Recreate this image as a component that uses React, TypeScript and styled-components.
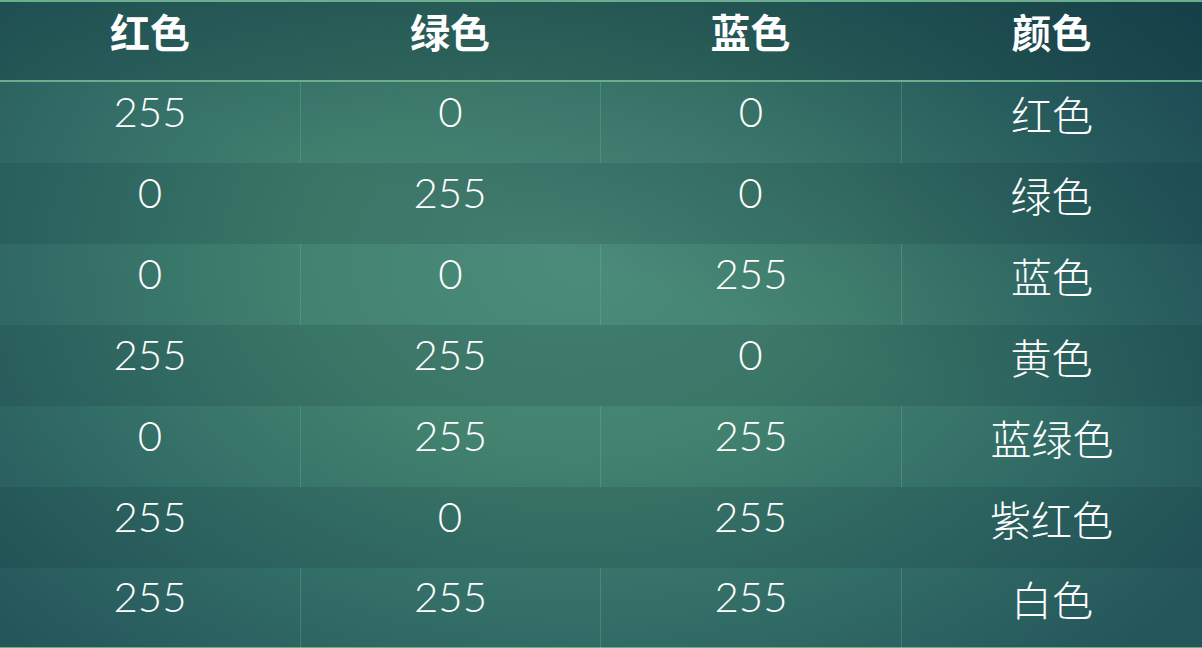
import React from "react";
import styled, { createGlobalStyle } from "styled-components";

const GlobalStyle = createGlobalStyle`
  html, body {
    margin: 0;
    padding: 0;
    background: #2c6463;
  }
`;

const headers = ["红色", "绿色", "蓝色", "颜色"];

const rows: string[][] = [
  ["255", "0", "0", "红色"],
  ["0", "255", "0", "绿色"],
  ["0", "0", "255", "蓝色"],
  ["255", "255", "0", "黄色"],
  ["0", "255", "255", "蓝绿色"],
  ["255", "0", "255", "紫红色"],
  ["255", "255", "255", "白色"],
];

const Table = styled.div`
  width: 1202px;
  height: 648px;
  box-sizing: border-box;
  display: grid;
  grid-template-rows: 80px repeat(6, 81px) 80px;
  border-top: 2px solid #6aae8c;
  background:
    linear-gradient(200deg, rgba(14, 52, 70, 0.5) 0%, rgba(14, 52, 70, 0) 45%),
    radial-gradient(ellipse 65% 85% at 48% 40%, #4c8c7b 0%, #42826f 35%, #336e67 65%, #24555b 100%);
  overflow: hidden;
`;

const Row = styled.div<{ $shade: "head" | "dark" | "light" }>`
  display: grid;
  grid-template-columns: 300px 300px 301px 301px;
  background: ${(p) =>
    p.$shade === "head"
      ? "rgba(8, 40, 48, 0.24)"
      : p.$shade === "dark"
      ? "rgba(8, 40, 48, 0.13)"
      : "transparent"};
  border-bottom: ${(p) => (p.$shade === "head" ? "2px solid #6aae8c" : "none")};
  box-sizing: border-box;

  &:last-child {
    border-bottom: 1px solid #6aae8c;
  }
`;

const HeadCell = styled.div`
  display: flex;
  align-items: center;
  justify-content: center;
  padding-bottom: 20px;
  color: #ffffff;
  font-family: "Noto Sans CJK SC", "Noto Sans", sans-serif;
  font-weight: 700;
  font-size: 40px;
`;

const Cell = styled.div<{ $line: boolean; $cjk: boolean }>`
  display: flex;
  align-items: center;
  justify-content: center;
  padding-bottom: ${(p) => (p.$cjk ? "20px" : "24px")};
  color: #ffffff;
  font-family: ${(p) =>
    p.$cjk
      ? `"Noto Sans CJK SC", "Noto Sans", sans-serif`
      : `Lato, "Noto Sans", sans-serif`};
  font-weight: 300;
  font-size: ${(p) => (p.$cjk ? "41px" : "42px")};
  border-left: ${(p) => (p.$line ? "1px solid rgba(120, 190, 150, 0.3)" : "none")};
`;

const App = () => {
  return (
    <React.Fragment>
      <GlobalStyle />
      <Table>
        <Row $shade="head">
          {headers.map((h) => (
            <HeadCell key={h}>{h}</HeadCell>
          ))}
        </Row>
        {rows.map((r, i) => (
          <Row key={`row-${i}`} $shade={i % 2 === 0 ? "light" : "dark"}>
            {r.map((v, j) => (
              <Cell
                key={`cell-${i}-${j}`}
                $line={i % 2 === 0 && j > 0}
                $cjk={j === 3}
              >
                {v}
              </Cell>
            ))}
          </Row>
        ))}
      </Table>
    </React.Fragment>
  );
};

export default App;
